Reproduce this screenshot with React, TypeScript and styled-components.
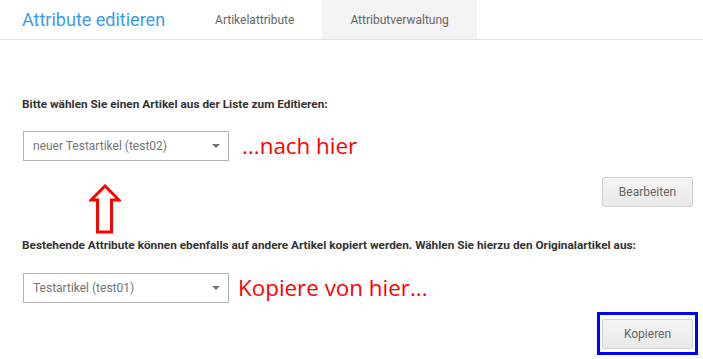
import styled, { createGlobalStyle } from "styled-components";

const GlobalStyle = createGlobalStyle`
  body {
    margin: 0;
    background: #ffffff;
    font-family: Roboto, "Liberation Sans", sans-serif;
  }
`;

const Page = styled.div`
  width: 703px;
  height: 359px;
  overflow: hidden;
`;

const Header = styled.div`
  display: flex;
  align-items: stretch;
  height: 39px;
  border-bottom: 1px solid #e4e4e4;
`;

const Title = styled.h1`
  margin: 0 22px 0 22px;
  display: flex;
  align-items: center;
  font-size: 18px;
  font-weight: 400;
  color: #3a9cf0;
`;

const Tab = styled.div<{ $active?: boolean }>`
  display: flex;
  align-items: center;
  padding: 0 28px;
  font-size: 12px;
  color: #666;
  background: ${(p) => (p.$active ? "#f3f3f3" : "transparent")};
`;

const Content = styled.div`
  position: relative;
  padding: 56px 10px 0 22px;
`;

const Label = styled.div<{ $top?: number }>`
  font-size: 11.8px;
  line-height: 16px;
  font-weight: 700;
  color: #333;
  margin-top: ${(p) => p.$top ?? 0}px;
`;

const SelectRow = styled.div<{ $top: number }>`
  display: flex;
  align-items: center;
  margin-top: ${(p) => p.$top}px;
`;

const Select = styled.div`
  box-sizing: border-box;
  width: 206px;
  height: 30px;
  margin-left: 1px;
  border: 1px solid #b3b3b3;
  display: flex;
  align-items: center;
  justify-content: space-between;
  padding: 0 8px 0 9px;
  font-size: 12px;
  color: #757575;
`;

const Caret = styled.span`
  width: 0;
  height: 0;
  border-left: 4px solid transparent;
  border-right: 4px solid transparent;
  border-top: 4px solid #707070;
`;

const Note = styled.span<{ $gap: number }>`
  margin-left: ${(p) => p.$gap}px;
  margin-top: -2px;
  font-family: "Open Sans", "DejaVu Sans", sans-serif;
  font-size: 22.4px;
  color: #ff0000;
`;

const ButtonRow = styled.div<{ $top: number }>`
  display: flex;
  justify-content: flex-end;
  margin-top: ${(p) => p.$top}px;
`;

const Button = styled.button`
  box-sizing: border-box;
  width: 91px;
  height: 30px;
  border: 1px solid #d2d2d2;
  border-radius: 2px;
  background: linear-gradient(#f4f4f4, #e9e9e9);
  font-family: Roboto, "Liberation Sans", sans-serif;
  font-size: 12px;
  color: #666;
`;

const Highlight = styled.div`
  border: 3px solid #0000ff;
  padding: 4px 2px 3px 2px;
  margin-right: -5px;
  display: flex;
`;

const Arrow = styled.svg`
  position: absolute;
  left: 89px;
  top: 144px;
`;

export default function App() {
  return (
    <Page>
      <GlobalStyle />
      <Header>
        <Title>Attribute editieren</Title>
        <Tab>Artikelattribute</Tab>
        <Tab $active>Attributverwaltung</Tab>
      </Header>
      <Content>
        <Label>Bitte wählen Sie einen Artikel aus der Liste zum Editieren:</Label>
        <SelectRow $top={19}>
          <Select>
            neuer Testartikel (test02)
            <Caret />
          </Select>
          <Note $gap={13}>...nach hier</Note>
        </SelectRow>
        <ButtonRow $top={16}>
          <Button>Bearbeiten</Button>
        </ButtonRow>
        <Label $top={30}>
          Bestehende Attribute können ebenfalls auf andere Artikel kopiert werden. Wählen Sie hierzu den Originalartikel aus:
        </Label>
        <SelectRow $top={20}>
          <Select>
            Testartikel (test01)
            <Caret />
          </Select>
          <Note $gap={9}>Kopiere von hier...</Note>
        </SelectRow>
        <ButtonRow $top={9}>
          <Highlight>
            <Button>Kopieren</Button>
          </Highlight>
        </ButtonRow>
        <Arrow width="32" height="50" viewBox="0 0 32 50">
          <polygon
            points="16,2 2,16 8.5,16 8.5,48 22.5,48 22.5,16 30,16"
            fill="#ffffff"
            stroke="#ff0000"
            strokeWidth="3"
          />
        </Arrow>
      </Content>
    </Page>
  );
}
